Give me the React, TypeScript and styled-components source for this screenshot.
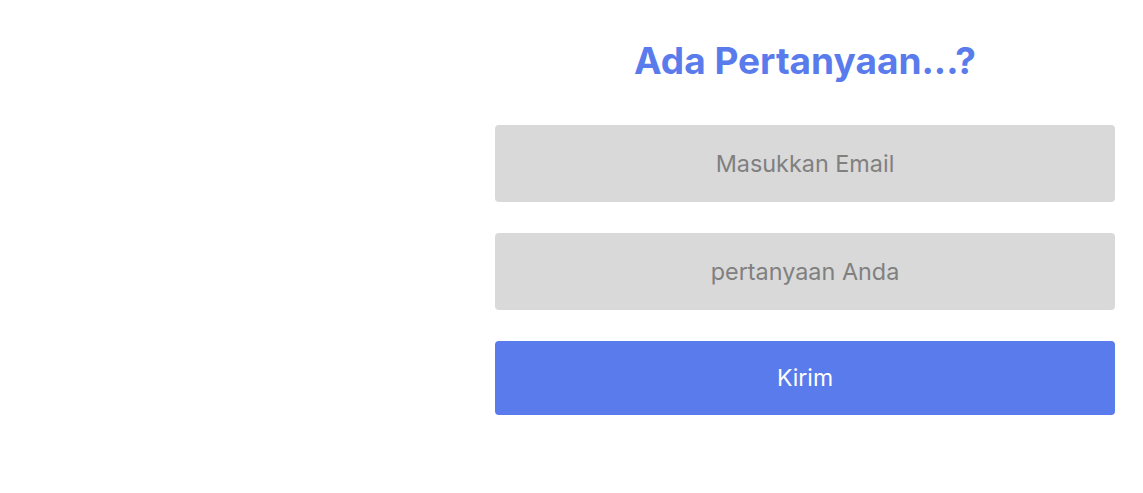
import React from "react";
import styled, { createGlobalStyle } from "styled-components";

const Global = createGlobalStyle`
  html, body { margin: 0; padding: 0; background: #ffffff; }
  body { font-family: Inter, "Noto Sans", sans-serif; }
  * { box-sizing: border-box; }
`;

const Page = styled.div`
  display: grid;
  grid-template-columns: 495px 620px;
  width: 1143px;
  height: 493px;
`;

const Side = styled.div``;

const Form = styled.form`
  display: flex;
  flex-direction: column;
  padding-top: 37px;
`;

const Title = styled.h2`
  margin: 0 0 40px;
  text-align: center;
  color: #5a7bec;
  font-family: Inter, sans-serif;
  font-weight: 700;
  font-size: 37px;
  line-height: 48px;
`;

const Field = styled.input`
  height: 77px;
  margin-bottom: 31px;
  border: none;
  border-radius: 4px;
  background: #d9d9d9;
  text-align: center;
  font-family: Inter, sans-serif;
  font-size: 23.4px;
  color: #333;
  outline: none;
  &::placeholder { color: #808080; }
`;

const Submit = styled.button`
  height: 74px;
  border: none;
  border-radius: 4px;
  background: #5a7bec;
  color: #ffffff;
  font-family: Inter, sans-serif;
  font-size: 23px;
  cursor: pointer;
`;

export default function App() {
  return (
    <>
      <Global />
      <Page>
        <Side />
        <Form onSubmit={(e) => e.preventDefault()}>
          <Title>Ada Pertanyaan...?</Title>
          <Field type="email" placeholder="Masukkan Email" />
          <Field type="text" placeholder="pertanyaan Anda" />
          <Submit type="submit">Kirim</Submit>
        </Form>
      </Page>
    </>
  );
}
